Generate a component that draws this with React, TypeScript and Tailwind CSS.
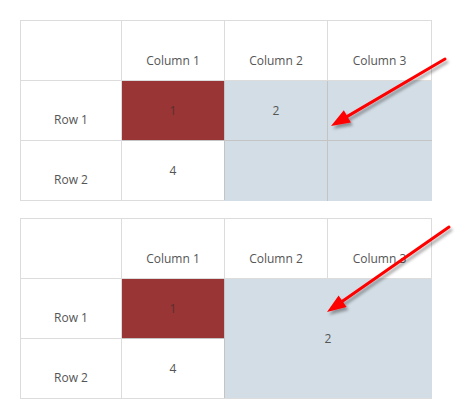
import React from "react";

const Arrow = ({ x1, y1, x2, y2, id }: { x1: number; y1: number; x2: number; y2: number; id: string }) => {
  const dx = x2 - x1;
  const dy = y2 - y1;
  const len = Math.sqrt(dx * dx + dy * dy);
  const ux = dx / len;
  const uy = dy / len;
  const headLen = 19;
  const headW = 7;
  const bx = x2 - ux * headLen;
  const by = y2 - uy * headLen;
  const p1 = `${bx - uy * headW},${by + ux * headW}`;
  const p2 = `${bx + uy * headW},${by - ux * headW}`;
  return (
    <g filter={`url(#${id})`}>
      <line x1={x1} y1={y1} x2={bx + ux * 2} y2={by + uy * 2} stroke="#ff0000" strokeWidth={3} strokeLinecap="round" />
      <polygon points={`${x2},${y2} ${p1} ${p2}`} fill="#ff0000" />
    </g>
  );
};

const Tabel = ({ merged }: { merged: boolean }) => {
  const head = "border border-[#dcdcdc] align-bottom text-center pb-[11px]";
  const label = "border border-[#dcdcdc] border-t-[#bdbdbd] align-bottom text-center pb-[12px]";
  const data = "border border-[#c4c4c4] text-center align-middle";
  return (
    <table className="table-fixed border-collapse w-[411px]">
      <colgroup>
        <col className="w-[101px]" />
        <col className="w-[103px]" />
        <col className="w-[103px]" />
        <col className="w-[104px]" />
      </colgroup>
      <thead>
        <tr className="h-[60px]">
          <th className={`${head} font-normal`}></th>
          <th className={`${head} font-normal`}>Column 1</th>
          <th className={`${head} font-normal`}>Column 2</th>
          <th className={`${head} font-normal`}>Column 3</th>
        </tr>
      </thead>
      <tbody>
        <tr className="h-[60px]">
          <td className={label}>Row 1</td>
          <td className={`${data} bg-[#993535] text-[#5a3030]`}>1</td>
          {merged ? (
            <td colSpan={2} rowSpan={2} className={`${data} bg-[#d3dde5] border-r-transparent border-b-[#dcdcdc]`}>2</td>
          ) : (
            <>
              <td className={`${data} bg-[#d3dde5]`}>2</td>
              <td className={`${data} bg-[#d3dde5] border-r-transparent`}></td>
            </>
          )}
        </tr>
        <tr className="h-[60px]">
          <td className={`${label} border-b-[#dcdcdc]`}>Row 2</td>
          <td className={`${data} border-b-[#dcdcdc]`}>4</td>
          {!merged && (
            <>
              <td className={`${data} bg-[#d3dde5] border-b-transparent`}></td>
              <td className={`${data} bg-[#d3dde5] border-r-transparent border-b-transparent`}></td>
            </>
          )}
        </tr>
      </tbody>
    </table>
  );
};

export default function App() {
  return (
    <div className="relative w-[455px] h-[414px] bg-white font-['Open_Sans',sans-serif] text-[12px] leading-[16px] text-[#555555]">
      <div className="flex flex-col gap-[17px] pt-[20px] pl-[20px]">
        <Tabel merged={false} />
        <Tabel merged={true} />
      </div>
      <svg className="absolute inset-0 pointer-events-none" width={455} height={414}>
        <defs>
          <filter id="sh1" x="-20%" y="-20%" width="140%" height="140%">
            <feDropShadow dx={2} dy={3} stdDeviation={1.6} floodColor="#000" floodOpacity={0.35} />
          </filter>
          <filter id="sh2" x="-20%" y="-20%" width="140%" height="140%">
            <feDropShadow dx={2} dy={3} stdDeviation={1.6} floodColor="#000" floodOpacity={0.35} />
          </filter>
        </defs>
        <Arrow id="sh1" x1={445} y1={59} x2={331} y2={126} />
        <Arrow id="sh2" x1={449} y1={227} x2={327} y2={312} />
      </svg>
    </div>
  );
}
